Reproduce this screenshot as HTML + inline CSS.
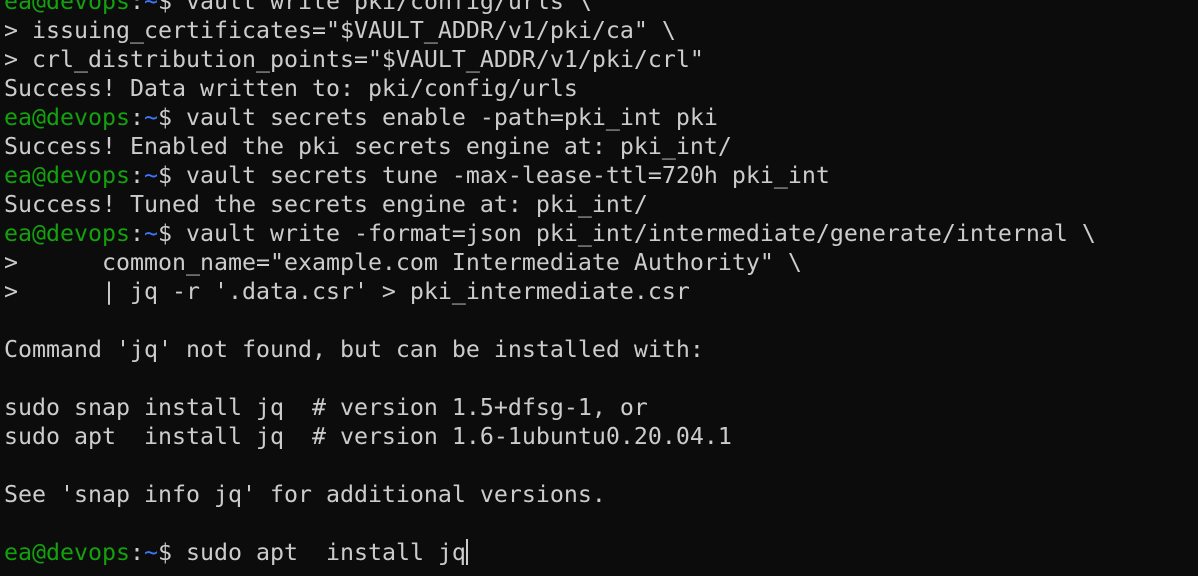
<!DOCTYPE html><html><head><style>
html,body{margin:0;background:#0c0c0c;width:1198px;height:576px;overflow:hidden}
pre{margin:0;position:absolute;left:4px;top:-13px;font-family:"DejaVu Sans Mono","Liberation Mono",monospace;font-size:23.25px;line-height:29px;color:#cccccc;white-space:pre}
.g{color:#13a10e}.b{color:#3b78ff}
.c{display:inline-block;width:2px;height:26px;background:#cccccc;vertical-align:-5px}
</style></head><body><pre><span class="g">ea@devops</span>:<span class="b">~</span>$ vault write pki/config/urls \
&gt; issuing_certificates="$VAULT_ADDR/v1/pki/ca" \
&gt; crl_distribution_points="$VAULT_ADDR/v1/pki/crl"
Success! Data written to: pki/config/urls
<span class="g">ea@devops</span>:<span class="b">~</span>$ vault secrets enable -path=pki_int pki
Success! Enabled the pki secrets engine at: pki_int/
<span class="g">ea@devops</span>:<span class="b">~</span>$ vault secrets tune -max-lease-ttl=720h pki_int
Success! Tuned the secrets engine at: pki_int/
<span class="g">ea@devops</span>:<span class="b">~</span>$ vault write -format=json pki_int/intermediate/generate/internal \
&gt;      common_name="example.com Intermediate Authority" \
&gt;      | jq -r '.data.csr' &gt; pki_intermediate.csr

Command 'jq' not found, but can be installed with:

sudo snap install jq  # version 1.5+dfsg-1, or
sudo apt  install jq  # version 1.6-1ubuntu0.20.04.1

See 'snap info jq' for additional versions.

<span class="g">ea@devops</span>:<span class="b">~</span>$ sudo apt  install jq<span class="c"></span></pre></body></html>
